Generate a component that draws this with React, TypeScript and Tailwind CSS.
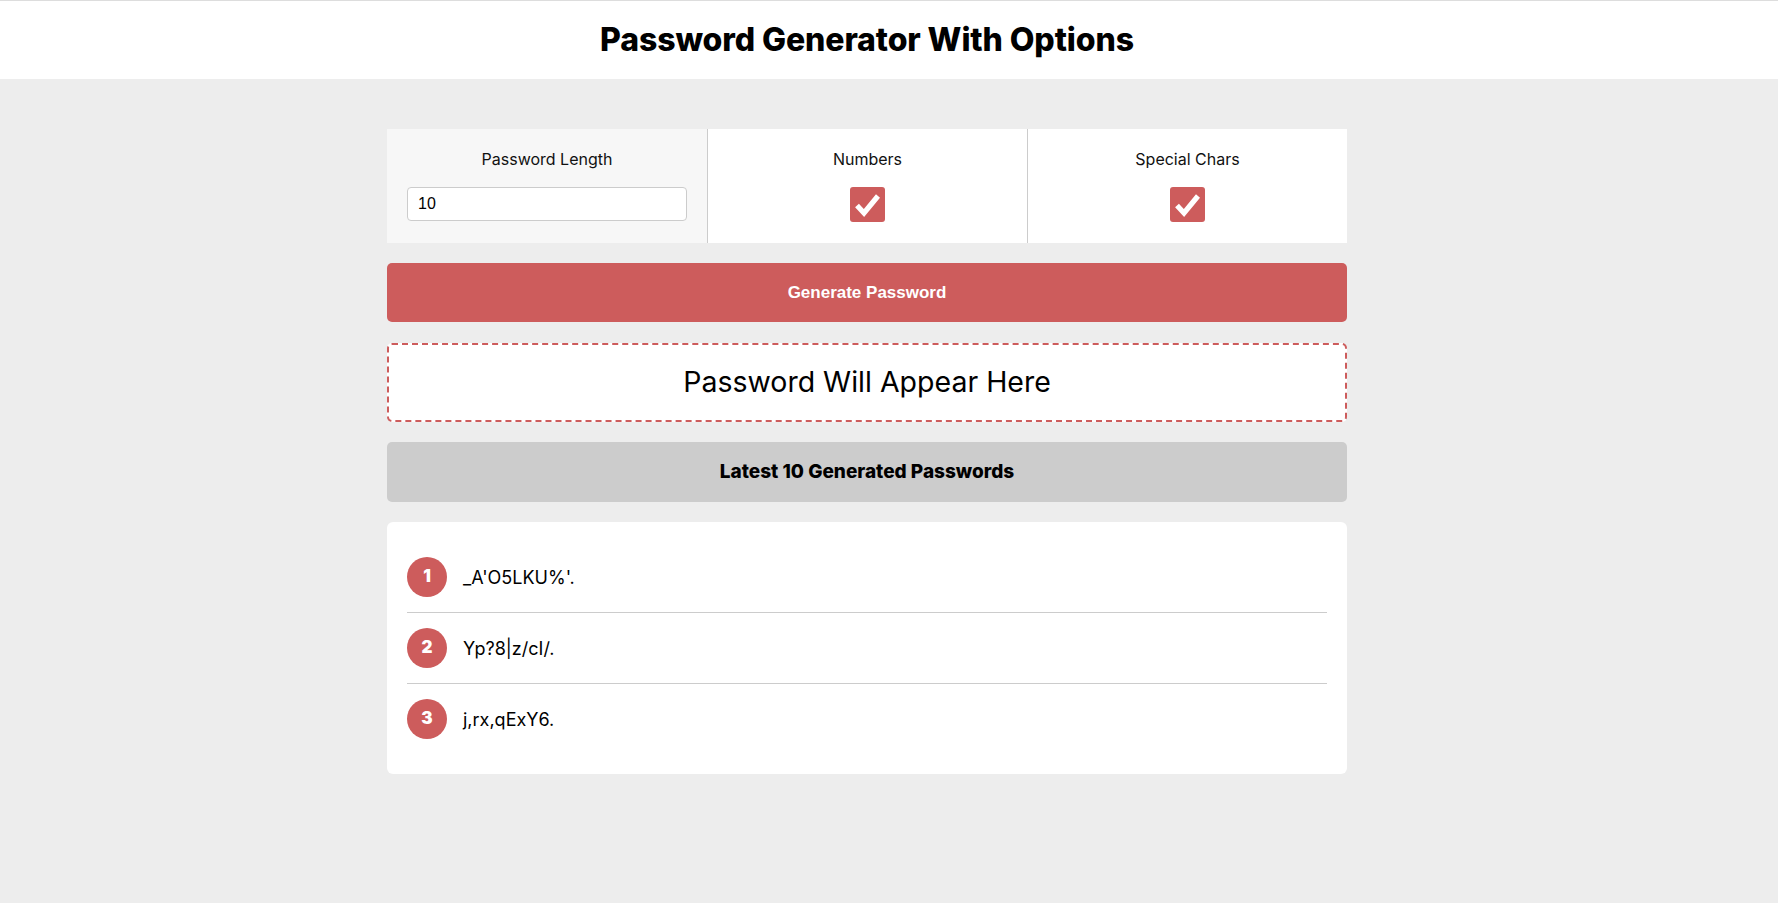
import React from "react";

const RED = "bg-[#cd5c5c]";

function Check() {
  return (
    <div className={`w-[35px] h-[35px] rounded-[3px] ${RED} flex items-center justify-center`}>
      <svg width="35" height="35" viewBox="0 0 35 35">
        <polyline points="7,18.5 14,26 28,9" fill="none" stroke="#fff" strokeWidth="5.2" strokeLinejoin="miter" />
      </svg>
    </div>
  );
}

const history = ["_A'O5LKU%'.", "Yp?8|z/cI/.", "j,rx,qExY6."];

export default function App() {
  return (
    <div className="min-h-screen bg-[#ededed] text-black font-['Inter','Noto_Sans',sans-serif]">
      <header className="bg-white border-t border-[#dddddd] h-[79px] flex items-center justify-center pr-[44px]">
        <h1 className="text-[32px] font-extrabold tracking-[-0.1px]">Password Generator With Options</h1>
      </header>

      <div className="pr-[44px] pt-[50px] pb-10">
        <main className="mx-auto w-[960px] flex flex-col">
          <section className="grid grid-cols-3 h-[114px]">
            <div className="bg-[#f7f7f7] flex flex-col items-center px-5 pt-[21px]">
              <label className="text-[16px] leading-[18px] text-[#111]">Password Length</label>
              <input
                type="text"
                defaultValue="10"
                className="mt-[19px] w-full h-[34px] bg-white border border-[#cccccc] rounded-[4px] px-[10px] text-[16px] font-['Liberation_Sans',Arial,sans-serif] outline-none"
              />
            </div>
            <div className="bg-white border-l border-[#cccccc] flex flex-col items-center pt-[21px]">
              <span className="text-[16px] leading-[18px] text-[#111]">Numbers</span>
              <div className="mt-[19px]"><Check /></div>
            </div>
            <div className="bg-white border-l border-[#cccccc] flex flex-col items-center pt-[21px]">
              <span className="text-[16px] leading-[18px] text-[#111]">Special Chars</span>
              <div className="mt-[19px]"><Check /></div>
            </div>
          </section>

          <button className={`mt-5 h-[59px] w-full rounded-[5px] ${RED} text-white text-[17px] font-bold font-['Liberation_Sans',Arial,sans-serif]`}>
            Generate Password
          </button>

          <div className="mt-[21px] h-[79px] bg-white border-2 border-dashed border-[#cd5c5c] rounded-[5px] flex items-center justify-center">
            <span className="text-[28.5px]">Password Will Appear Here</span>
          </div>

          <div className="mt-5 h-[60px] bg-[#cccccc] rounded-[5px] flex items-center justify-center">
            <span className="text-[19px] font-extrabold">Latest 10 Generated Passwords</span>
          </div>

          <div className="mt-5 bg-white rounded-[6px] p-5">
            {history.map((pw, i) => (
              <div
                key={i}
                className={`flex items-center gap-4 py-[15px] ${i < history.length - 1 ? "border-b border-[#cccccc]" : ""}`}
              >
                <div className={`w-10 h-10 rounded-full ${RED} flex items-center justify-center text-white text-[17px] font-black`}>
                  {i + 1}
                </div>
                <span className="text-[18px]">{pw}</span>
              </div>
            ))}
          </div>
        </main>
      </div>
    </div>
  );
}
